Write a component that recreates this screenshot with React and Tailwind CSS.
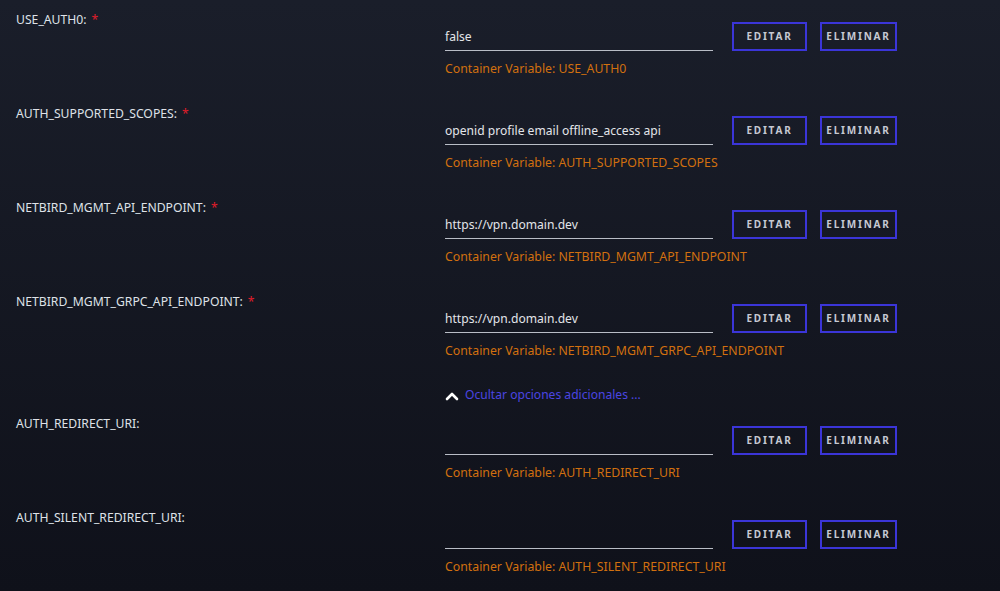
import React from "react";

const rows = [
  { name: "USE_AUTH0", value: "false", required: true },
  { name: "AUTH_SUPPORTED_SCOPES", value: "openid profile email offline_access api", required: true },
  { name: "NETBIRD_MGMT_API_ENDPOINT", value: "https://vpn.domain.dev", required: true },
  { name: "NETBIRD_MGMT_GRPC_API_ENDPOINT", value: "https://vpn.domain.dev", required: true },
];
const extra = [
  { name: "AUTH_REDIRECT_URI", value: "", required: false },
  { name: "AUTH_SILENT_REDIRECT_URI", value: "", required: false },
];

function Row({ name, value, required }) {
  return (
    <div className="flex items-start h-[94px]">
      <div className="w-[445px] shrink-0 pl-4 pt-[12px] text-[12.2px] leading-4 text-[#dfe2e8] whitespace-nowrap">
        {name}:{required && <span className="text-[#e11d2a] ml-[5px]">*</span>}
      </div>
      <div className="w-[268px] shrink-0 pt-[22px]">
        <div className="h-[29px] border-b border-[#b9bdc6] flex items-center text-[12.1px] text-[#e3e5ea] pt-[3px]">
          {value}
        </div>
        <div className="mt-[10px] text-[12.3px] leading-4 text-[#d2700f] whitespace-nowrap">Container Variable: {name}</div>
      </div>
      <div className="flex gap-[13px] ml-[19px] mt-[22px]">
        <button className="h-[29px] w-[75px] border-2 border-[#3b35d8] text-[10px] font-bold tracking-[1.8px] text-[#c6c9d2] flex items-center justify-center">
          EDITAR
        </button>
        <button className="h-[29px] w-[77px] border-2 border-[#3b35d8] text-[10px] font-bold tracking-[1.8px] text-[#c6c9d2] flex items-center justify-center">
          ELIMINAR
        </button>
      </div>
    </div>
  );
}

export default function App() {
  return (
    <div
      className="w-[1000px] h-[591px] overflow-hidden bg-gradient-to-b from-[#1a1e2a] to-[#0f111a]"
      style={{ fontFamily: '"Noto Sans", "Open Sans", sans-serif' }}
    >
      {rows.map((r) => (
        <Row key={r.name} {...r} />
      ))}
      <div className="h-[28px] pl-[445px] pt-[11px] flex items-start">
        <div className="flex items-center h-4 gap-[6px] text-[12.1px] leading-4 text-[#4b45e2]">
          <svg width="14" height="10" viewBox="0 0 14 10" className="mt-[1px]">
            <path d="M2 8 L7 3 L12 8" fill="none" stroke="#ffffff" strokeWidth="2.6" strokeLinecap="round" strokeLinejoin="round" />
          </svg>
          <span>Ocultar opciones adicionales ...</span>
        </div>
      </div>
      {extra.map((r) => (
        <Row key={r.name} {...r} />
      ))}
    </div>
  );
}
